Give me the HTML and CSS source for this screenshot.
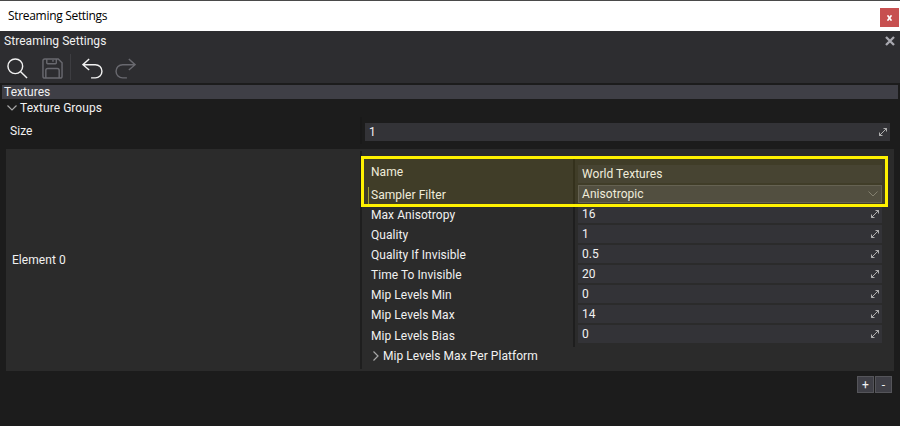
FILE: index.html
```
<!DOCTYPE html>
<html lang="en">
<head>
<meta charset="utf-8">
<title>Streaming Settings</title>
<link rel="stylesheet" href="styles.css">
</head>
<body>
<svg width="0" height="0" class="symbols" aria-hidden="true">
  <symbol id="expand" viewBox="0 0 10 10"><path d="M1.500 8.500L8.500 1.500M5.500 1.500H8.500V4.500M1.500 5.500V8.500H4.500" fill="none" stroke="#bdbdbd" stroke-width=".9"/></symbol>
</svg>
<header class="titlebar"><span>Streaming Settings</span>
  <button class="window-close" aria-label="Close window"><svg width="5" height="6" viewBox="0 0 5 6"><path d="M.5 .3L4.500 5.700M4.500 .3L.5 5.700" stroke="#fff" stroke-width="1.600"/></svg></button>
</header>
<section class="tool-head">
  <div class="tab"><span>Streaming Settings</span><svg width="10" height="10" viewBox="0 0 10 10"><path d="M1 1L9 9M9 1L1 9" stroke="#a9a9b0" stroke-width="2.300"/></svg></div>
  <div class="tools">
    <svg width="21" height="21" viewBox="0 0 22 22" class="on"><circle cx="8.700" cy="8.700" r="7.700"/><path d="M14.300 14.300L21 21"/></svg>
    <svg width="21" height="21" viewBox="0 0 22 22" class="off save"><path d="M3 1H17L21 5V19Q21 21 19 21H3Q1 21 1 19V3Q1 1 3 1ZM5 1V5Q5 6 6 6H14Q15 6 15 5V1M11.500 2V4M4 21V13Q4 11 6 11H16Q18 11 18 13V21"/></svg>
    <i></i>
    <svg width="21" height="21" viewBox="0 0 22 22" class="on"><path d="M7.500 1L1 7L7.500 12.500M1 7H14A6.800 6.800 0 0 1 14 20.800H9.500"/></svg>
    <svg width="21" height="21" viewBox="0 0 22 22" class="off redo"><path d="M14.500 1L21 7L14.500 12.500M21 7H8A6.800 6.800 0 0 0 8 20.800H12.500"/></svg>
  </div>
</section>
<main>
  <h2>Textures</h2>
  <div class="group"><svg width="10" height="6" viewBox="0 0 10 6"><path d="M.5 .5L5 5L9.500 .5" fill="none" stroke="#a8a8a8" stroke-width="1.200"/></svg><span>Texture Groups</span></div>
  <div class="size"><span>Size</span><i></i><div class="field"><span>1</span><svg class="ex"><use href="#expand"/></svg></div></div>
  <section class="element">
    <div class="element-name">Element 0</div>
    <div class="properties">
      <div class="columns">
        <div class="labels"><span class="name">Name</span><span class="filter">Sampler Filter</span><span>Max Anisotropy</span><span>Quality</span><span>Quality If Invisible</span><span>Time To Invisible</span><span>Mip Levels Min</span><span>Mip Levels Max</span><span class="bias">Mip Levels Bias</span></div>
        <div class="values">
          <div class="field first"><span>World Textures</span></div>
          <div class="field select"><span>Anisotropic</span><svg width="10" height="6" viewBox="0 0 10 6"><path d="M.5 .5L5 5L9.500 .5" fill="none" stroke="#77777b"/></svg></div>
          <div class="field"><span>16</span><svg class="ex"><use href="#expand"/></svg></div>
          <div class="field"><span>1</span><svg class="ex"><use href="#expand"/></svg></div>
          <div class="field"><span>0.5</span><svg class="ex"><use href="#expand"/></svg></div>
          <div class="field"><span>20</span><svg class="ex"><use href="#expand"/></svg></div>
          <div class="field"><span>0</span><svg class="ex"><use href="#expand"/></svg></div>
          <div class="field"><span>14</span><svg class="ex"><use href="#expand"/></svg></div>
          <div class="field"><span>0</span><svg class="ex"><use href="#expand"/></svg></div>
        </div>
      </div>
      <div class="platform"><svg width="6" height="10" viewBox="0 0 6 10"><path d="M.5 .5L5 5L.5 9.500" fill="none" stroke="#a8a8a8" stroke-width="1.200"/></svg><span>Mip Levels Max Per Platform</span></div>
      <div class="highlight"></div>
    </div>
  </section>
  <div class="actions"><button>+</button><button>-</button></div>
</main>
</body>
</html>
```
FILE: styles.css
```
* { box-sizing: border-box; }
body { margin: 0; width: 900px; height: 426px; overflow: hidden; background: #1c1c1c; color: #f1f1f1; font: 12px/16px Roboto, sans-serif; letter-spacing: .05px; }
svg { display: block; flex: none; }
button { margin: 0; padding: 0; border: 0; font: inherit; color: inherit; }
.symbols { position: absolute; }
.titlebar { height: 31px; border-top: 1px solid #4a4a4a; background: #fff; color: #000; display: flex; justify-content: space-between; padding: 7px 1px 0 8px; font: 12px/16px "Open Sans", sans-serif; letter-spacing: -.31px; }
.window-close { width: 19px; height: 19px; background: #c75050; display: grid; place-items: center; }
.tool-head { height: 52px; background: #2d2d30; }
.tab { height: 20px; padding: 0 5px 0 4px; display: flex; align-items: center; justify-content: space-between; }
.tools { display: flex; align-items: flex-start; padding: 3px 0 0 7px; }
.tools svg { fill: none; stroke-width: 1.5; margin-top: 4px; }
.tools .save { margin-left: 14px; }
.tools .redo { margin-left: 12px; }
.tools i { width: 1px; height: 26px; background: #3d3d41; margin: 0 11px 0 7px; }
.on { stroke: #f1f1f1; }
.off { stroke: #69696f; }
main { padding: 2px 2px 0; }
h2 { margin: 0; height: 14px; font: inherit; line-height: 14px; padding-left: 2px; background: #3f3f46; }
.group { height: 18px; display: flex; align-items: center; gap: 3px; padding-left: 5px; }
.size { height: 32px; display: flex; padding: 6px 8px 0; }
.size > span { width: 350px; }
.size i { width: 2px; height: 27px; margin: -6px 3px 0 0; background: #191919; }
.field { flex: 1; height: 18px; background: #333337; display: flex; align-items: center; justify-content: space-between; padding: 0 2px 0 4px; }
.ex { width: 10px; height: 10px; }
.element { height: 222px; margin: 0 4px; background: #2b2b2b; display: flex; }
.element-name { width: 354px; padding-left: 6px; display: flex; align-items: center; }
.properties { position: relative; flex: 1; border-left: 2px solid #1e1e1e; margin: 2px 0; }
.columns { display: flex; height: 196px; }
.labels { width: 213px; margin-top: 6px; border-right: 2px solid #1e1e1e; padding: 7px 0 0 9px; display: flex; flex-direction: column; }
.labels span { height: 20px; }
.labels .name { height: 23px; }
.labels .filter { margin-left: -3px; padding-left: 2px; border-left: 1px solid #98983c; }
.labels .bias { padding-top: 1px; }
.values { width: 307px; padding: 14px 0 0 3px; display: flex; flex-direction: column; gap: 2px; }
.values .field { flex: none; }
.values .select { background: #3f3f46; border: 1px solid #55555a; padding: 0 3px; }
.platform { height: 18px; display: flex; align-items: center; gap: 4px; padding-left: 11px; }
.highlight { position: absolute; left: -1px; top: 5px; width: 527px; height: 51px; border: 3px solid #fff200; background: rgba(234, 207, 16, .11); }
.actions { display: flex; gap: 1px; justify-content: flex-end; padding: 5px 6px 0; }
.actions button { width: 17px; height: 17px; background: #3f3f46; border: 1px solid #55555a; line-height: 14px; }
```
